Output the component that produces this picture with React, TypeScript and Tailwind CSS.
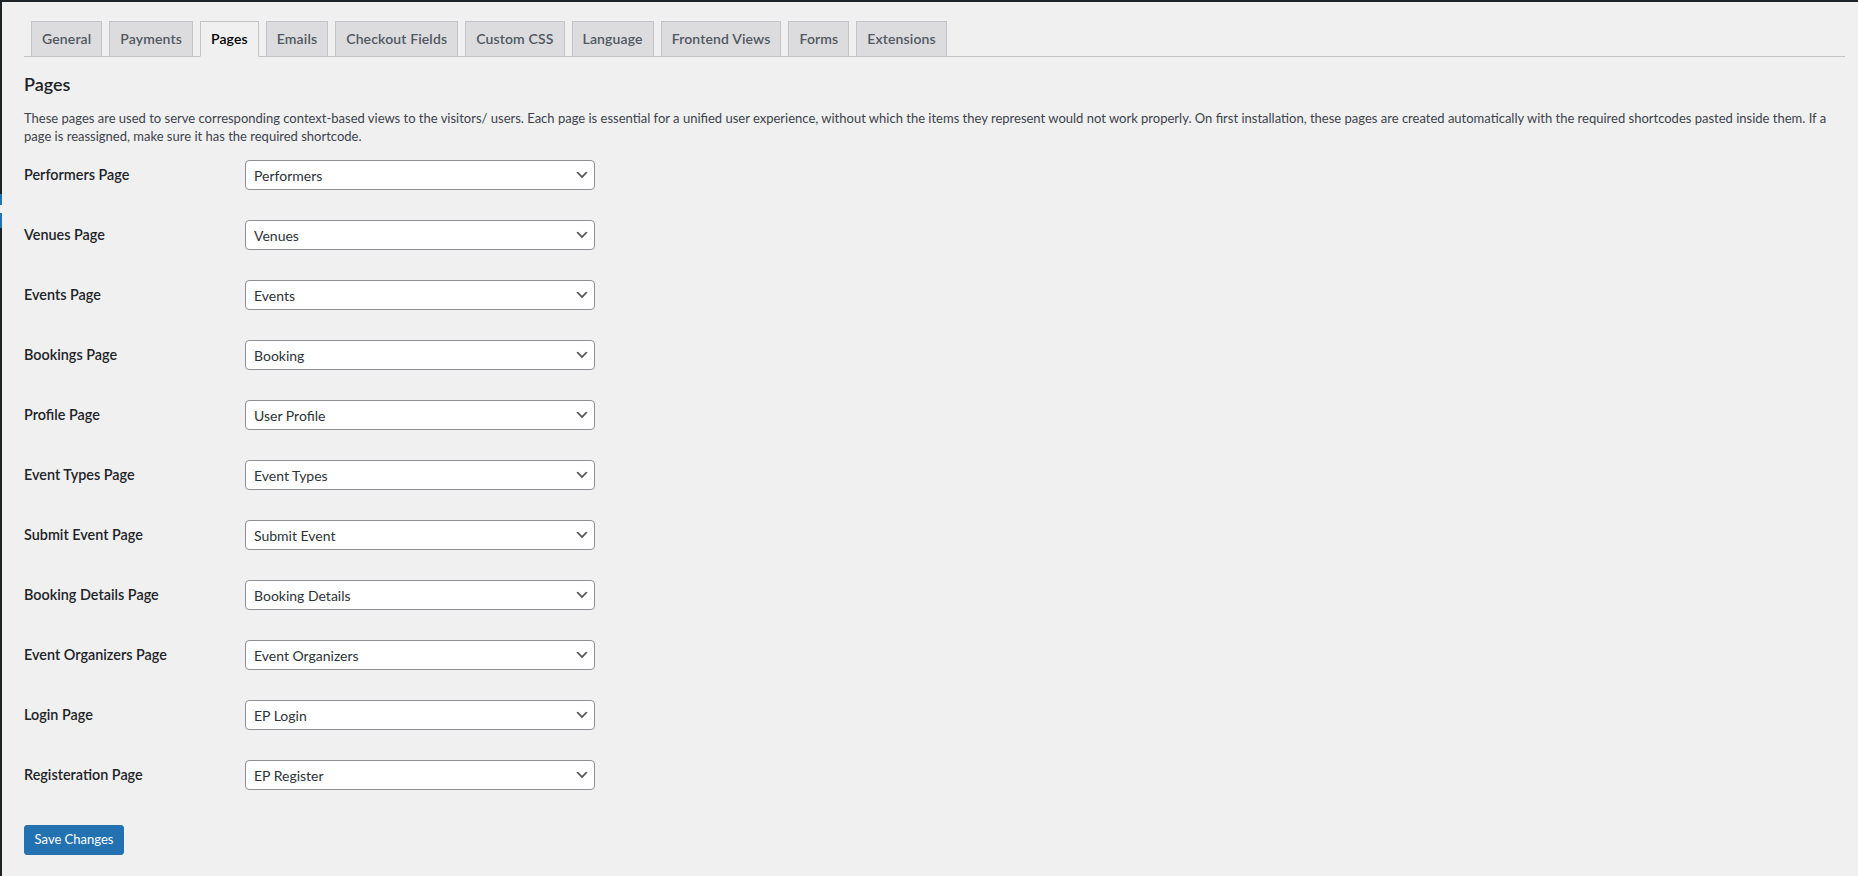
import { useState } from "react";

const tabs = [
  "General",
  "Payments",
  "Pages",
  "Emails",
  "Checkout Fields",
  "Custom CSS",
  "Language",
  "Frontend Views",
  "Forms",
  "Extensions",
];

const pageRows = [
  { label: "Performers Page", value: "Performers" },
  { label: "Venues Page", value: "Venues" },
  { label: "Events Page", value: "Events" },
  { label: "Bookings Page", value: "Booking" },
  { label: "Profile Page", value: "User Profile" },
  { label: "Event Types Page", value: "Event Types" },
  { label: "Submit Event Page", value: "Submit Event" },
  { label: "Booking Details Page", value: "Booking Details" },
  { label: "Event Organizers Page", value: "Event Organizers" },
  { label: "Login Page", value: "EP Login" },
  { label: "Registeration Page", value: "EP Register" },
];

const allPages = [
  "Performers",
  "Venues",
  "Events",
  "Booking",
  "User Profile",
  "Event Types",
  "Submit Event",
  "Booking Details",
  "Event Organizers",
  "EP Login",
  "EP Register",
];

function Chevron() {
  // same glyph WordPress uses for select arrows
  return (
    <svg className="pointer-events-none absolute right-[5px] top-1/2 h-4 w-4 -translate-y-1/2" viewBox="0 0 20 20">
      <path d="M5 6l5 5 5-5 2 1-7 7-7-7 2-1z" fill="#555" />
    </svg>
  );
}

function PageSelect({ value }: { value: string }) {
  const [current, setCurrent] = useState(value);
  return (
    <div className="relative w-[350px]">
      <select
        value={current}
        onChange={(e) => setCurrent(e.target.value)}
        className="h-[30px] w-full appearance-none rounded-[4px] border border-[#8c8f94] bg-white pl-[8px] pr-[24px] text-[14px] text-[#2c3338] outline-none"
      >
        {allPages.map((p) => (
          <option key={p} value={p}>
            {p}
          </option>
        ))}
      </select>
      <Chevron />
    </div>
  );
}

export default function App() {
  const [active, setActive] = useState("Pages");

  return (
    <div className="flex min-h-screen flex-col bg-[#f0f0f1] font-['Lato',sans-serif]">
      <div className="h-[2px] bg-[#1d2327]" />
      <div className="flex flex-1">
        {/* sliver of the admin menu */}
        <div className="flex w-[2px] flex-col">
          <div className="h-[192px] bg-[#1d2327]" />
          <div className="relative h-[34px] bg-[#2271b1]">
            <svg className="absolute left-0 top-[11px] h-[8px] w-[2px]" viewBox="0 0 2 8" preserveAspectRatio="none">
              <polygon points="0,0 2,0 2,8 0,8" fill="#f0f0f1" />
            </svg>
          </div>
          <div className="flex-1 bg-[#1d2327]" />
        </div>

        <div className="flex-1 pl-[22px] pr-[13px]">
          {/* Tabs */}
          <div className="mt-[19px] flex gap-[7px] border-b border-[#c3c4c7] pl-[7px]">
            {tabs.map((t) => {
              const isActive = t === active;
              return (
                <button
                  key={t}
                  onClick={() => setActive(t)}
                  className={
                    isActive
                      ? "-mb-px border border-[#c3c4c7] border-b-[#f0f0f1] bg-[#f0f0f1] px-[10px] py-[5px] text-[14px] font-semibold leading-[24px] tracking-[0.01em] text-black"
                      : "-mb-px border border-[#c3c4c7] bg-[#dcdcde] px-[10px] py-[5px] text-[14px] font-semibold leading-[24px] tracking-[0.01em] text-[#50575e]"
                  }
                >
                  {t}
                </button>
              );
            })}
          </div>

          <h2 className="mt-[16px] text-[18px] font-semibold leading-[23px] text-[#1d2327]">Pages</h2>

          <p className="mt-[13px] text-[13px] leading-[18px] text-[#3c434a]">
            These pages are used to serve corresponding context-based views to the visitors/ users. Each page is essential for a unified user experience, without which the items they represent would not work properly. On first installation, these pages are created automatically with the required shortcodes pasted inside them. If a page is reassigned, make sure it has the required shortcode.
          </p>

          {/* Form rows */}
          <div className="flex flex-col">
            {pageRows.map((row) => (
              <div key={row.label} className="flex h-[60px] items-center">
                <label className="w-[221px] text-[14.4px] font-semibold text-[#1d2327]">{row.label}</label>
                <PageSelect value={row.value} />
              </div>
            ))}
          </div>

          <button className="mt-[20px] h-[30px] w-[100px] rounded-[3px] border border-[#2271b1] bg-[#2271b1] text-[13px] text-white">
            Save Changes
          </button>
        </div>
      </div>
    </div>
  );
}
